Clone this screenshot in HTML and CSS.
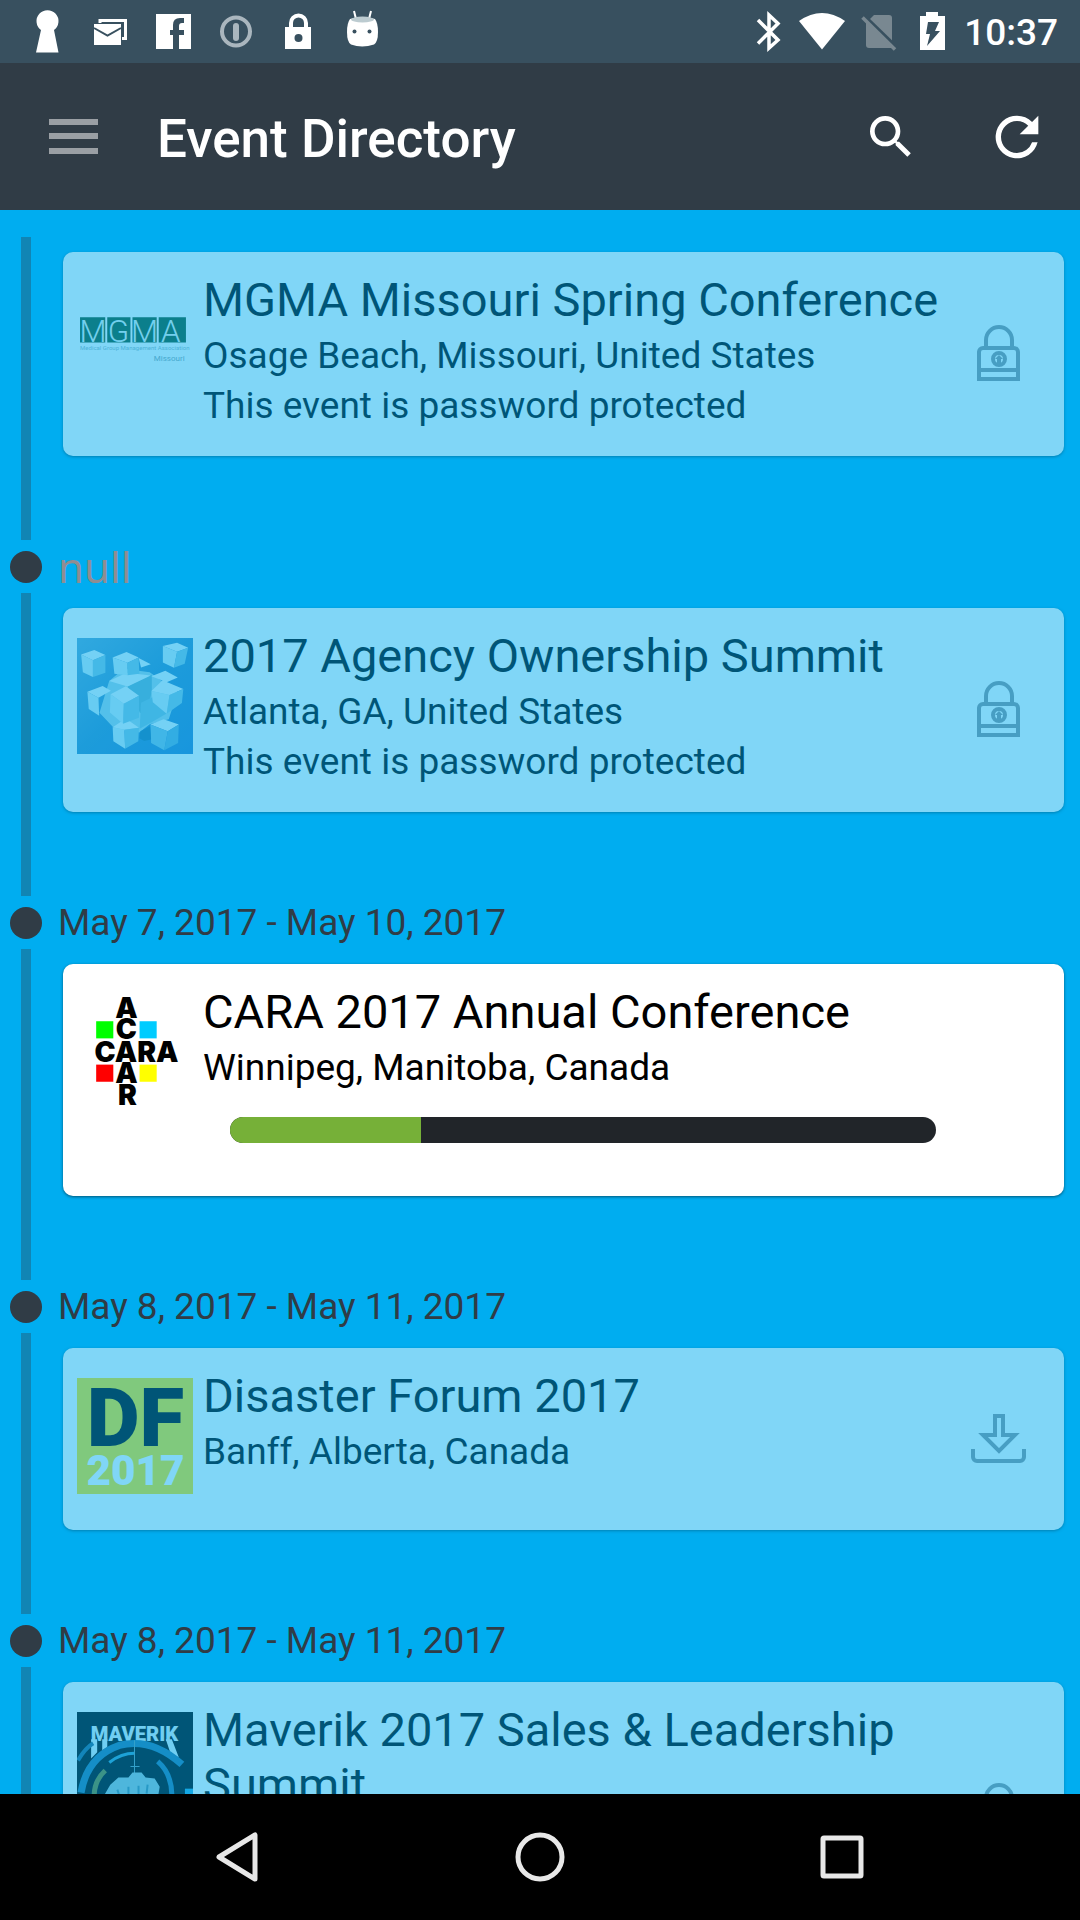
FILE: index.html
```html
<!DOCTYPE html>
<html lang="en">
<head>
<meta charset="utf-8">
<meta name="viewport" content="width=device-width, initial-scale=1">
<title>Event Directory</title>
<link rel="stylesheet" href="styles.css">
</head>
<body>
<svg class="sprite" aria-hidden="true">
  <symbol id="lock" viewBox="0 0 60 60">
    <g fill="none" stroke="currentColor" stroke-width="4">
      <path d="M17 25V16a13 13 0 0 1 26 0v9"/>
      <path d="M10 55V28a4 4 0 0 1 4-4h31a4 4 0 0 1 4 4v27z"/>
      <path d="M10 46h39"/>
      <circle cx="30" cy="35" r="6"/>
    </g>
    <path d="M30 31l4 4h-2v4h-4v-4h-2z" fill="currentColor"/>
  </symbol>
  <symbol id="download" viewBox="0 0 60 60">
    <g fill="none" stroke="currentColor" stroke-width="4">
      <path d="M26 26V7h8v19h12L30 42 14 26z"/>
      <path d="M4 40v8a4 4 0 0 0 4 4h43a4 4 0 0 0 4-4v-8"/>
    </g>
  </symbol>
</svg>

<div class="status-bar">
  <div class="notifications">
    <svg viewBox="16 0 63 63"><path fill="#fff" d="M41 30a11 11 0 1 1 13 0l4.500 22.500H36z"/></svg>
    <svg viewBox="79 0 63 63"><path fill="none" stroke="#fff" stroke-width="3" d="M100 23v-2.500h25.500V38.500H122"/><path fill="#fff" d="M94 24h27v21H94z"/><path fill="none" stroke="#38505f" stroke-width="2" d="M94 28l13.500 7.500L121 28"/></svg>
    <svg viewBox="142 0 63 63"><path fill="#fff" fill-rule="evenodd" d="M156 14h35v35h-12V35h5v-5h-5v-4q0-3 3-3h2v-5h-4q-7 0-7 7v5h-3v5h3v14h-17z"/></svg>
    <svg viewBox="205 0 63 63"><circle cx="236" cy="31.500" r="14" fill="none" stroke="#aab6be" stroke-width="4"/><rect x="233" y="23" width="6" height="18" rx="3" fill="#aab6be"/></svg>
    <svg viewBox="268 0 63 63"><path fill="none" stroke="#fff" stroke-width="4" d="M291 28v-5a7.500 7.500 0 0 1 15 0v5"/><path fill="#fff" d="M285 27h26v22h-26z"/><circle cx="298.500" cy="38" r="4" fill="#38505f"/></svg>
    <svg viewBox="331 0 63 63"><path stroke="#fff" stroke-width="2" d="M354 11l2 8M371 11l-2 8"/><path fill="#fff" d="M350 19q12-4 25 0 3 4 3 13 0 10-4 12.500-12 4-23 0Q347 42 347 32q0-9 3-13z"/><ellipse cx="362.500" cy="19.500" rx="11.500" ry="3" fill="#bccbd0"/><circle cx="354.500" cy="31.500" r="2" fill="#38505f"/><circle cx="369.500" cy="31.500" r="2" fill="#38505f"/></svg>
  </div>
  <div class="system">
    <svg viewBox="744 0 54 63"><path fill="none" stroke="#fff" stroke-width="3.500" d="M760 20l20 20-9 8V15l9 8.500-20 20"/></svg>
    <svg viewBox="798 0 54 63"><path fill="#fff" d="M801 21q23-16 46 0l-23 28.500z"/></svg>
    <svg viewBox="852 0 54 63"><path fill="#798891" d="M876 15h15q3 0 3 3v30H871q-3 0-3-3V23z"/><path stroke="#38505f" stroke-width="4" d="M866 16l33 32"/><path stroke="#798891" stroke-width="3.500" d="M864.500 17.500l32.500 32"/></svg>
    <svg viewBox="906 0 54 63"><path fill="#fff" d="M928 12h12v4h7v34h-25V16h6z"/><path fill="#38505f" d="M930 22h11l-4 9h5l-13 15 3-12h-4z"/></svg>
    <time class="clock">10:37</time>
  </div>
</div>

<header class="toolbar">
  <button class="icon-button" type="button" aria-label="Menu">
    <svg width="49" height="36" viewBox="0 0 49 36"><path fill="#9a9fa4" d="M0 0h49v6H0zM0 14h49v6H0zM0 29h49v6H0z"/></svg>
  </button>
  <h1 class="toolbar-title">Event Directory</h1>
  <button class="icon-button" type="button" aria-label="Search">
    <svg width="56" height="56" viewBox="0 0 24 24"><path fill="#fff" d="M15.500 14h-.79l-.28-.27A6.471 6.471 0 0 0 16 9.500 6.500 6.500 0 1 0 9.500 16c1.610 0 3.090-.59 4.230-1.570l.27.28v.79l5 4.990L20.490 19l-4.990-5zm-6 0C7.010 14 5 11.990 5 9.500S7.010 5 9.500 5 14 7.010 14 9.500 11.990 14 9.500 14z"/></svg>
  </button>
  <button class="icon-button" type="button" aria-label="Refresh">
    <svg width="64" height="64" viewBox="0 0 24 24"><path fill="#fff" d="M17.650 6.350A7.958 7.958 0 0 0 12 4a8 8 0 1 0 7.730 10h-2.080A5.990 5.990 0 0 1 12 18c-3.310 0-6-2.690-6-6s2.690-6 6-6c1.660 0 3.140.69 4.220 1.780L13 11h7V4l-2.350 2.350z"/></svg>
  </button>
</header>

<main class="events">
  <ol class="timeline">
    <li class="entry">
      <span class="rail"></span>
      <article class="card faded">
        <svg class="thumb" viewBox="0 0 115 115">
          <path fill="#16532a" d="M3 35h25v25H3zM30 35h23v25H30zM55 35h24v25H55zM81 35h27v25H81z"/>
          <g class="mgma-letters"><text x="16" y="59">M</text><text x="41" y="59">G</text><text x="67" y="59">M</text><text x="93" y="59">A</text></g>
          <text class="mgma-small" x="3" y="67">Medical Group Management Association</text>
          <text class="mgma-state" x="76" y="78">Missouri</text>
        </svg>
        <div class="details">
          <h2 class="title">MGMA Missouri Spring Conference</h2>
          <p class="line">Osage Beach, Missouri, United States</p>
          <p class="line">This event is password protected</p>
        </div>
        <div class="action"><svg role="img" aria-label="Locked"><use href="#lock"/></svg></div>
      </article>
    </li>

    <li class="entry">
      <span class="dot"></span>
      <p class="date missing">null</p>
      <span class="rail"></span>
      <article class="card faded">
        <svg class="thumb" viewBox="225 322 335 346" preserveAspectRatio="none">
          <defs><linearGradient id="sky" x1="0" y1="0" x2="1" y2="1"><stop offset="0" stop-color="#62a6d0"/><stop offset=".5" stop-color="#3a8cc6"/><stop offset="1" stop-color="#3080cc"/></linearGradient></defs>
          <path fill="url(#sky)" d="M225 322h335v346H225z"/>
          <path fill="#a5d4e6" d="M290 545l28-95 42-36 75 10 40 30 40 30-25 80-55 15-30 25-70-10z"/>
          <path fill="#6fb2cc" d="M371 467l70-36v50l-12 60-22 5z"/>
          <path fill="#7fbfda" d="M410 515l36-18 38 50-46 28-32 18z"/>
          <path fill="#e8f5fa" d="M237 371l38-13 32 15-36 15zM328 380l40-16 35 16-32 16zM403 382l35 18-28 10zM473 346l41-10 32 15-32 12zM255 482l44-17 24 14-36 21zM318 450l50-24 70 8-67 33zM440 436l40-16 36 20-32 14zM440 480l32-32 60 26-40 18zM437 580l38-16 44 16-32 20zM328 588l38-26 38 28-42 6zM322 490l44-24 38 28-44 24z"/>
          <path fill="#cdebf5" d="M237 371l34 17v50l-29-14zM328 380l43 16v37l-38-4zM473 346l41 17-9 48-32-16zM255 482l32 18 2 54-30-20zM322 490l38 28-2 60-38-34zM440 480l52 12-8 56-40-34zM328 588l34 8 2 56-34-22z"/>
          <path fill="#88c5e0" d="M307 373l-36 15v50l36-12zM403 380l-32 16v37l34-4zM546 351l-32 12-9 48 31-12zM532 474l-40 18-8 56 44-32zM404 494l-44 24-2 60 46-18zM404 590l-42 6 2 56 38-22z"/>
          <path fill="#80bfe0" d="M437 580l50 20-10 57-38-22z"/>
          <path fill="#65add8" d="M519 580l-32 20-10 57 40-22z"/>
          <path fill="#2877ac" d="M408 600l28-15 3 40-20 4-14-8z"/>
        </svg>
        <div class="details">
          <h2 class="title">2017 Agency Ownership Summit</h2>
          <p class="line">Atlanta, GA, United States</p>
          <p class="line">This event is password protected</p>
        </div>
        <div class="action"><svg role="img" aria-label="Locked"><use href="#lock"/></svg></div>
      </article>
    </li>

    <li class="entry">
      <span class="dot"></span>
      <p class="date">May 7, 2017 - May 10, 2017</p>
      <span class="rail"></span>
      <article class="card">
        <svg class="thumb" viewBox="0 0 115 115">
          <path fill="#0f0" d="M19 27h17v17H19z"/><path fill="#0cf" d="M62 27h17v17H62z"/>
          <path fill="red" d="M19 70h17v17H19z"/><path fill="#ff0" d="M62 70h17v17H62z"/>
          <g class="cara-letters"><text x="49" y="24">A</text><text x="49" y="45">C</text><text x="59" y="67">CARA</text><text x="49" y="88">A</text><text x="50" y="110">R</text></g>
        </svg>
        <div class="details">
          <h2 class="title">CARA 2017 Annual Conference</h2>
          <p class="line">Winnipeg, Manitoba, Canada</p>
          <progress class="download-progress" aria-label="Download progress" max="100" value="27"></progress>
        </div>
        <div class="action"></div>
      </article>
    </li>

    <li class="entry">
      <span class="dot"></span>
      <p class="date">May 8, 2017 - May 11, 2017</p>
      <span class="rail"></span>
      <article class="card faded">
        <svg class="thumb" viewBox="0 0 115 115">
          <path class="df-ground" d="M0 0h115v115H0z"/>
          <text class="df-letters" x="58" y="67">DF</text>
          <text class="df-year" x="58" y="106">2017</text>
        </svg>
        <div class="details">
          <h2 class="title">Disaster Forum 2017</h2>
          <p class="line">Banff, Alberta, Canada</p>
        </div>
        <div class="action"><svg role="img" aria-label="Download"><use href="#download"/></svg></div>
      </article>
    </li>

    <li class="entry">
      <span class="dot"></span>
      <p class="date">May 8, 2017 - May 11, 2017</p>
      <span class="rail"></span>
      <article class="card faded">
        <svg class="thumb" viewBox="0 0 115 115">
          <path d="M0 0h115v115H0z"/>
          <text class="maverik-letters" x="57" y="29">MAVERIK</text>
          <path fill="#e0f0f5" d="M14 27h6v13l-6 6zM25 27h5v8l-5 3zM88 27h6l7 18-8-3z"/>
          <path fill="#000" d="M21 115V43Q57 18 92 43v72z"/>
          <path fill="none" stroke="#2a70a0" stroke-width="7" d="M4 80Q10 44 42 33q32-8 62 19"/>
          <path fill="none" stroke="#265f86" stroke-width="4" d="M1 48Q8 36 16 31"/>
          <path fill="none" stroke="#2a70a0" stroke-width="5" d="M80 49q14 12 14 34"/>
          <path fill="none" stroke="#3b98c0" stroke-width="3" d="M32 50q12-9 25-9"/>
          <path fill="none" stroke="#777b20" stroke-width="5" d="M17 84q0-16 11-26"/>
          <path stroke="#6694a5" d="M57 28v36M53 54h9"/>
          <path fill="#9cbfca" d="M25 86l8-14 8-7 10 0 4-5 9 0 4 5 9 1 5 8-2 12 6 20H25z"/>
          <path fill="none" stroke="#4e879d" stroke-width="2" d="M40 77l2 6M51 74v9M61 73v10M70 72l-1 9"/>
          <path fill="#29a5dc" d="M107 76h8v20h-8z"/>
        </svg>
        <div class="details">
          <h2 class="title">Maverik 2017 Sales &amp; Leadership Summit</h2>
          <p class="line">Park City, Utah, United States</p>
          <p class="line">This event is password protected</p>
        </div>
        <div class="action"><svg role="img" aria-label="Locked"><use href="#lock"/></svg></div>
      </article>
    </li>
  </ol>
</main>

<nav class="nav-bar">
  <button class="icon-button" type="button" aria-label="Back"><svg width="54" height="54" viewBox="0 0 54 54"><path d="M8 27L44 5v44z"/></svg></button>
  <button class="icon-button" type="button" aria-label="Home"><svg width="54" height="54" viewBox="0 0 54 54"><circle cx="27" cy="27" r="22"/></svg></button>
  <button class="icon-button" type="button" aria-label="Recent apps"><svg width="54" height="54" viewBox="0 0 54 54"><rect x="8" y="8" width="38" height="38" rx="1"/></svg></button>
</nav>
</body>
</html>
```
FILE: styles.css
```css
* {
  box-sizing: border-box;
}

body {
  margin: 0;
  height: 100vh;
  display: flex;
  flex-direction: column;
  background: #00adf0;
  font-family: Roboto, "Liberation Sans", sans-serif;
}

svg {
  display: block;
}

.sprite {
  display: none;
}

.icon-button {
  display: flex;
  align-items: center;
  justify-content: center;
  margin: 0;
  padding: 0;
  border: 0;
  background: none;
}

/* Status bar */
.status-bar {
  flex: none;
  display: flex;
  justify-content: space-between;
  height: 63px;
  padding: 0 22px 0 16px;
  background: #38505f;
}

.notifications,
.system {
  display: flex;
  align-items: center;
}

.notifications svg {
  width: 63px;
  height: 63px;
}

.system svg {
  width: 54px;
  height: 63px;
}

.clock {
  padding: 2px 0 0 6px;
  color: #fff;
  font-size: 37px;
  font-weight: 500;
  line-height: 61px;
}

/* Toolbar */
.toolbar {
  flex: none;
  display: flex;
  align-items: center;
  height: 147px;
  padding: 0 31px 0 49px;
  background: #303c46;
}

.toolbar-title {
  flex: 1;
  margin: 0 0 0 59px;
  padding-top: 4px;
  color: #fff;
  font-size: 53px;
  font-weight: 500;
  line-height: 64px;
}

.toolbar .icon-button + .icon-button {
  margin-left: 66px;
}

/* Timeline */
.events {
  flex: 1;
  min-height: 0;
  overflow-y: auto;
  scrollbar-width: none;
}

.timeline {
  margin: 0;
  padding: 27px 16px 0 0;
  list-style: none;
}

.entry {
  display: grid;
  grid-template-columns: 52px 1fr;
}

.dot {
  align-self: center;
  justify-self: center;
  width: 32px;
  height: 32px;
  border-radius: 50%;
  background: #303c46;
}

.date {
  margin: 0;
  padding-left: 6px;
  height: 53px;
  color: #303c46;
  font-size: 37px;
  line-height: 53px;
}

.date.missing {
  color: #8f8d92;
  font-family: "Noto Sans", sans-serif;
  font-size: 42px;
}

.rail {
  justify-self: center;
  width: 10px;
  background: #1185b4;
}

.card {
  display: flex;
  margin: 15px 0 84px 11px;
  padding: 0 35px 0 14px;
  border-radius: 10px;
  background: #fff;
  box-shadow: 0 1px 3px rgba(0, 0, 0, 0.5);
  color: #000;
}

.card.faded {
  opacity: 0.5;
}

.thumb {
  flex: none;
  width: 116px;
  height: 116px;
  margin: 30px 10px 36px 0;
}

.details {
  flex: 1;
  padding: 20px 0 25px;
}

.title {
  margin: 0 0 4px;
  font-size: 47px;
  font-weight: 400;
  line-height: 55px;
}

.line {
  margin: 0;
  font-size: 37px;
  line-height: 50px;
}

.action {
  flex: none;
  align-self: center;
  width: 60px;
  color: #8e9198;
}

.action svg {
  width: 60px;
  height: 60px;
}

.download-progress {
  display: block;
  width: calc(100% - 60px);
  height: 26px;
  margin: 24px 33px 28px 27px;
  border: 0;
  border-radius: 13px;
  overflow: hidden;
  appearance: none;
  background: #212529;
}

.download-progress::-webkit-progress-bar {
  background: #212529;
}

.download-progress::-webkit-progress-value {
  background: #76b038;
}

/* Event logos */
.mgma-letters {
  fill: #e4f2ee;
  font-size: 31px;
  font-weight: 300;
  text-anchor: middle;
}

.mgma-small {
  fill: #9ab8c0;
  font-size: 6px;
}

.mgma-state {
  fill: #8fa4ac;
  font-size: 8px;
}

.cara-letters {
  font-family: Inter, Roboto, sans-serif;
  font-size: 28px;
  font-weight: 900;
  text-anchor: middle;
}

.df-ground {
  fill: #ffe60c;
}

.df-letters {
  font-size: 81px;
  font-weight: 900;
  text-anchor: middle;
}

.df-year {
  fill: #fff;
  font-size: 42px;
  font-weight: 900;
  text-anchor: middle;
}

.maverik-letters {
  fill: #e0f0f5;
  font-size: 20px;
  font-weight: 900;
  text-anchor: middle;
}

/* System navigation */
.nav-bar {
  flex: none;
  display: grid;
  grid-template-columns: repeat(3, 1fr);
  height: 126px;
  padding: 0 8%;
  background: #000;
}

.nav-bar svg {
  fill: none;
  stroke: #e8e8e8;
  stroke-width: 5;
  stroke-linejoin: round;
}
```
